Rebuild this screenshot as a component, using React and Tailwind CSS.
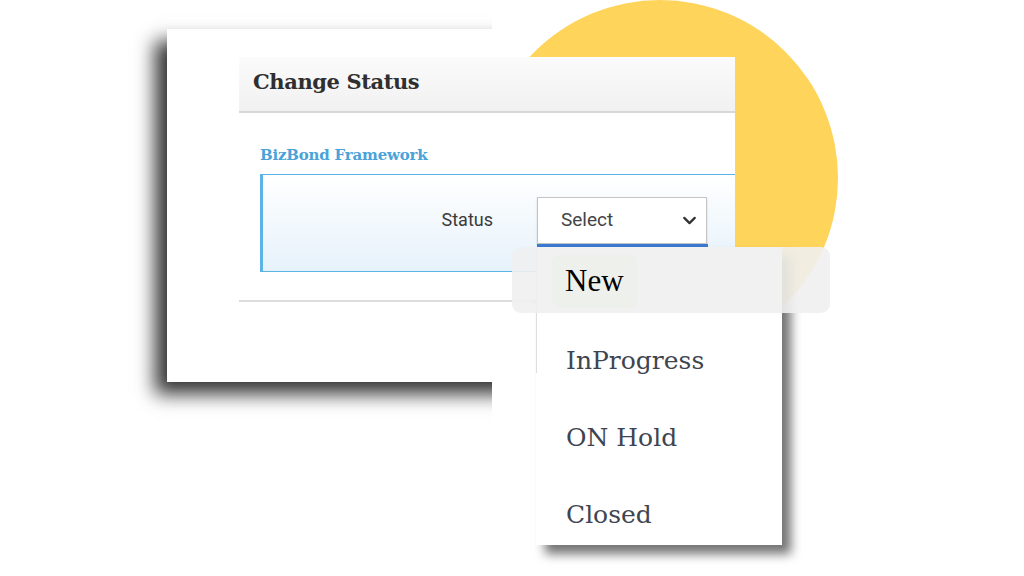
import { ChevronDown } from "lucide-react";

const SLAB = "font-['DejaVu_Serif',serif]";
const SANS = "font-['Roboto',sans-serif]";

const OPTIONS = ["InProgress", "ON Hold", "Closed"];

function StatusDialog() {
  return (
    <div className="absolute left-[239px] top-[57px] flex w-[496px] flex-col bg-white">
      <div className="flex h-[56px] items-center border-b-2 border-[#d8d8d8] bg-gradient-to-b from-[#fbfbfb] to-[#f1f1f1] pb-[4px] pl-[14px]">
        <h1 className={`${SLAB} text-[21px] font-bold tracking-[-0.4px] text-[#2f2f2f]`}>Change Status</h1>
      </div>

      <div className="flex flex-col border-b-2 border-[#dcdcdc] pb-[28px] pl-[21px] pt-[32px]">
        <div className={`${SLAB} mb-[9px] text-[15px] font-bold leading-[20px] tracking-[-0.2px] text-[#4aa3d8]`}>
          BizBond Framework
        </div>

        <div className="flex h-[98px] items-start border-b border-l-[3px] border-t border-[#5db3e6] bg-gradient-to-b from-white to-[#e6f2fb] pt-[22px]">
          <div className={`${SANS} w-[274px] pr-[44px] pt-[9px] text-right text-[18px] text-[#3a3a3a]`}>Status</div>
          <div className="flex flex-col">
            <div className="flex h-[47px] w-[170px] items-center justify-between border border-[#c4c4c4] bg-white pl-[23px] pr-[6px] shadow-[0_1px_2px_rgba(0,0,0,0.15)]">
              <span className={`${SANS} text-[19px] text-[#444]`}>Select</span>
              <ChevronDown size={21} strokeWidth={2.6} className="text-[#333]" />
            </div>
            <div className="h-[3px] w-[171px] bg-[#3b78d0]" />
          </div>
        </div>
      </div>
    </div>
  );
}

function OptionsList() {
  return (
    <div className="absolute left-[536px] top-[247px] flex h-[298px] w-[246px] flex-col gap-[37px] bg-white pl-[30px] pt-[94px] shadow-[9px_9px_10px_rgba(0,0,0,0.55)]">
      <div className="absolute left-0 top-0 h-[126px] w-px bg-[#dedede]" />
      {OPTIONS.map((o) => (
        <div key={o} className={`${SLAB} h-[40px] text-[25px] leading-[40px] text-[#3f4550]`}>
          {o}
        </div>
      ))}
    </div>
  );
}

export default function App() {
  return (
    <div className="relative h-[576px] w-[1024px] overflow-hidden bg-white">
      <div className="absolute left-[482px] top-0 h-[356px] w-[356px] rounded-full bg-[#fed45b]" />

      <div className="absolute left-[100px] top-0 h-[450px] w-[392px] overflow-hidden">
        <div className="absolute left-[67px] top-[29px] h-[353px] w-[400px] bg-white shadow-[-12px_12px_18px_rgba(0,0,0,0.8)]" />
      </div>

      <StatusDialog />
      <OptionsList />

      <div className="absolute left-[512px] top-[247px] flex h-[66px] w-[318px] items-center rounded-[9px] bg-[#efefef]/90 pl-[40px] pt-[3px]">
        <div className="flex h-[53px] items-center rounded-[8px] bg-[#eef0ec] px-[13px]">
          <span className="font-['Liberation_Serif',serif] text-[31px] text-black">New</span>
        </div>
      </div>
    </div>
  );
}
